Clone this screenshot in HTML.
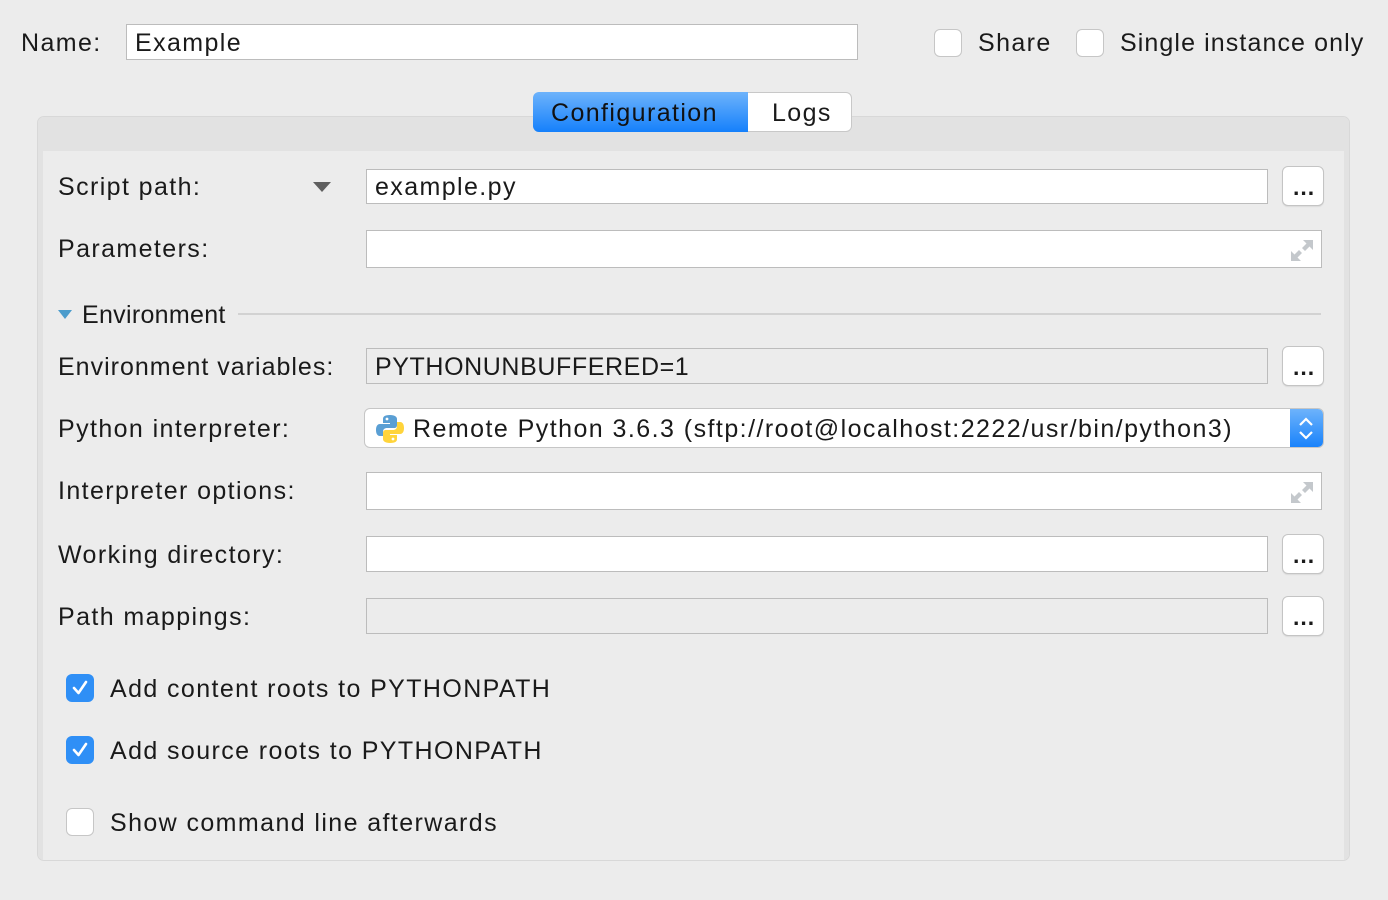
<!DOCTYPE html>
<html><head><meta charset="utf-8"><style>
body{margin:0;width:1388px;height:900px;background:#ececec;font-family:"Liberation Sans",sans-serif;font-size:25px;color:#1a1a1a;position:relative;overflow:hidden;letter-spacing:1.4px}
.a{position:absolute}
.t{position:absolute;line-height:28px;white-space:nowrap}
.f{position:absolute;background:#fff;border:1px solid #bcbcbc;box-sizing:border-box}
.g{background:#ececec}
.b{position:absolute;width:42px;height:40px;background:#fff;border:1px solid #c4c4c4;border-radius:6px;box-sizing:border-box;box-shadow:0 1px 1px rgba(0,0,0,.08)}
.b:after{content:"...";position:absolute;left:10px;top:7px;font-size:23px;font-weight:bold;letter-spacing:1px}
.cb{position:absolute;width:28px;height:28px;background:#fff;border:1px solid #c6c6c6;border-radius:6px;box-sizing:border-box}
.cc{position:absolute;width:28px;height:28px;background:#2f8ff6;border-radius:6px}
.ex{position:absolute;right:6px;top:6px}
</style></head><body>
<div class="t" style="left:21px;top:29px">Name:</div>
<div class="f" style="left:126px;top:24px;width:732px;height:36px"></div>
<div class="t" style="left:135px;top:29px">Example</div>
<div class="cb" style="left:934px;top:29px"></div>
<div class="t" style="left:978px;top:29px">Share</div>
<div class="cb" style="left:1076px;top:29px"></div>
<div class="t" style="left:1120px;top:29px;letter-spacing:1.1px">Single instance only</div>

<div class="a" style="left:37px;top:116px;width:1313px;height:745px;border:1px solid #d8d8d8;border-radius:7px;box-sizing:border-box;background:#ececec;overflow:hidden">
<div class="a" style="left:0;top:0;width:100%;height:34px;background:#e2e2e2"></div>
<div class="a" style="left:0;top:34px;width:5px;height:100%;background:#e2e2e2"></div>
<div class="a" style="right:0;top:34px;width:5px;height:100%;background:#e2e2e2"></div>
</div>
<div class="a" style="left:533px;top:92px;width:215px;height:40px;border-radius:6px 0 0 6px;background:linear-gradient(#6db3fb,#1580fb)"></div>
<div class="a" style="left:748px;top:92px;width:104px;height:40px;border-radius:0 6px 6px 0;background:#fff;border:1px solid #c8c8c8;border-left:none;box-sizing:border-box"></div>
<div class="t" style="left:551px;top:99px;color:#111">Configuration</div>
<div class="t" style="left:772px;top:99px">Logs</div>

<div class="t" style="left:58px;top:173px">Script path:</div>
<svg class="a" style="left:312px;top:181px" width="20" height="12"><path d="M1 1H19L10 11Z" fill="#5f5f5f"/></svg>
<div class="f" style="left:366px;top:169px;width:902px;height:35px"></div>
<div class="t" style="left:375px;top:173px">example.py</div>
<div class="b" style="left:1282px;top:166px"></div>

<div class="t" style="left:58px;top:235px">Parameters:</div>
<div class="f" style="left:366px;top:230px;width:956px;height:38px"><svg class="ex" width="26" height="26"><path d="M14 3H24V13L20.5 9.5 16 14 13 11 17.5 6.5Z M2 24V14L5.5 17.5 10 13 13 16 8.5 20.5 12 24Z" fill="#c4c8cc"/></svg></div>

<svg class="a" style="left:58px;top:310px" width="14" height="10"><path d="M0 0H14L7 9Z" fill="#4b9ccc"/></svg>
<div class="t" style="left:82px;top:301px;letter-spacing:0.3px">Environment</div>
<div class="a" style="left:238px;top:313px;width:1083px;height:2px;background:#d2d2d2"></div>

<div class="t" style="left:58px;top:353px;letter-spacing:1px">Environment variables:</div>
<div class="f g" style="left:366px;top:348px;width:902px;height:36px"></div>
<div class="t" style="left:375px;top:353px;letter-spacing:0.6px">PYTHONUNBUFFERED=1</div>
<div class="b" style="left:1282px;top:346px"></div>

<div class="t" style="left:58px;top:415px">Python interpreter:</div>
<div class="a" style="left:364px;top:408px;width:960px;height:40px;background:#fff;border:1px solid #c6c6c6;border-radius:6px;box-sizing:border-box;overflow:hidden">
<div class="a" style="right:0;top:0;width:33px;height:40px;background:linear-gradient(#6db3fb,#1580fb)"></div>
<svg class="a" style="right:8px;top:7px" width="18" height="26"><path d="M3 9L9 3 15 9M3 16L9 22 15 16" stroke="#fff" stroke-width="2.2" fill="none"/></svg>
</div>
<svg class="a" style="left:375px;top:414px" width="30" height="30" viewBox="0 0 30 30"><path d="M15 1C9 1 8 3 8 5V9H15V10H5C2 10 1 13 1 16S2 22 5 22H8V18C8 15 10 14 12 14H19C21 14 22 13 22 11V5C22 3 20 1 15 1Z" fill="#5a9fd4"/><path d="M15 29C21 29 22 27 22 25V21H15V20H25C28 20 29 17 29 14S28 8 25 8H22V12C22 15 20 16 18 16H11C9 16 8 17 8 19V25C8 27 10 29 15 29Z" fill="#ffd43b"/><circle cx="12" cy="5" r="1.4" fill="#fff"/><circle cx="18" cy="25" r="1.4" fill="#fff"/></svg>
<div class="t" style="left:413px;top:415px;letter-spacing:1.45px">Remote Python 3.6.3 (sftp://root@localhost:2222/usr/bin/python3)</div>

<div class="t" style="left:58px;top:477px">Interpreter options:</div>
<div class="f" style="left:366px;top:472px;width:956px;height:38px"><svg class="ex" width="26" height="26"><path d="M14 3H24V13L20.5 9.5 16 14 13 11 17.5 6.5Z M2 24V14L5.5 17.5 10 13 13 16 8.5 20.5 12 24Z" fill="#c4c8cc"/></svg></div>

<div class="t" style="left:58px;top:541px">Working directory:</div>
<div class="f" style="left:366px;top:536px;width:902px;height:36px"></div>
<div class="b" style="left:1282px;top:534px"></div>

<div class="t" style="left:58px;top:603px">Path mappings:</div>
<div class="f g" style="left:366px;top:598px;width:902px;height:36px"></div>
<div class="b" style="left:1282px;top:596px"></div>

<div class="cc" style="left:66px;top:674px"><svg width="28" height="28"><path d="M8 14L12.5 19 20 8" stroke="#fff" stroke-width="2.6" fill="none" stroke-linecap="round" stroke-linejoin="round"/></svg></div>
<div class="t" style="left:110px;top:675px">Add content roots to PYTHONPATH</div>
<div class="cc" style="left:66px;top:736px"><svg width="28" height="28"><path d="M8 14L12.5 19 20 8" stroke="#fff" stroke-width="2.6" fill="none" stroke-linecap="round" stroke-linejoin="round"/></svg></div>
<div class="t" style="left:110px;top:737px">Add source roots to PYTHONPATH</div>
<div class="cb" style="left:66px;top:808px"></div>
<div class="t" style="left:110px;top:809px">Show command line afterwards</div>
</body></html>
